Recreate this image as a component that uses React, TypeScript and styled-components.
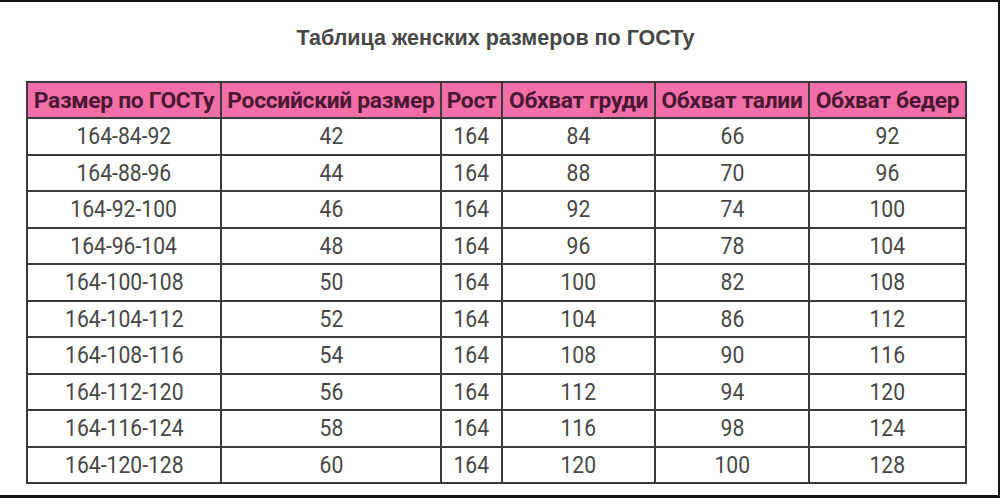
import React from "react";
import styled, { createGlobalStyle } from "styled-components";

const Global = createGlobalStyle`
  html, body { margin: 0; padding: 0; background: #fff; }
  #root { width: 1000px; height: 498px; }
`;

const Frame = styled.div`
  box-sizing: border-box;
  width: 1000px;
  height: 498px;
  border-top: 2px solid #141414;
  border-right: 2px solid #141414;
  border-bottom: 3px solid #141414;
  background: #fff;
  display: flex;
  flex-direction: column;
  padding: 0 0 0 26px;
`;

const Title = styled.h1`
  margin: 0;
  height: 79px;
  box-sizing: border-box;
  padding-top: 24px;
  width: 939px;
  text-align: center;
  font-family: "Liberation Sans", Arial, sans-serif;
  font-weight: 700;
  font-size: 21.5px;
  color: #474747;
`;

const Table = styled.table`
  border-collapse: collapse;
  table-layout: fixed;
  width: 939px;
  font-family: Roboto, "Noto Sans", sans-serif;
`;

const Head = styled.th`
  height: 34px;
  padding: 0;
  background: #f36fa8;
  color: #4a1832;
  font-weight: 700;
  font-size: 22.8px;
  border: 2px solid #3a3a3a;
  white-space: nowrap;
  text-align: center;
  letter-spacing: -0.3px;
  overflow: hidden;
`;

const Cell = styled.td`
  height: 34.5px;
  padding: 0;
  text-align: center;
  color: #474747;
  font-size: 24px;
  font-weight: 400;
  border: 2px solid #3a3a3a;
  line-height: 1;
`;

const Value = styled.span`
  display: inline-block;
  transform: scaleX(0.88);
`;

const cols = [194, 220, 61, 153, 154, 157];
const heads = [
  "Размер по ГОСТу",
  "Российский размер",
  "Рост",
  "Обхват груди",
  "Обхват талии",
  "Обхват бедер",
];

const rows = [
  ["164-84-92", "42", "164", "84", "66", "92"],
  ["164-88-96", "44", "164", "88", "70", "96"],
  ["164-92-100", "46", "164", "92", "74", "100"],
  ["164-96-104", "48", "164", "96", "78", "104"],
  ["164-100-108", "50", "164", "100", "82", "108"],
  ["164-104-112", "52", "164", "104", "86", "112"],
  ["164-108-116", "54", "164", "108", "90", "116"],
  ["164-112-120", "56", "164", "112", "94", "120"],
  ["164-116-124", "58", "164", "116", "98", "124"],
  ["164-120-128", "60", "164", "120", "100", "128"],
];

export default function App() {
  return (
    <>
      <Global />
      <Frame>
        <Title>Таблица женских размеров по ГОСТу</Title>
        <Table>
          <colgroup>
            {cols.map((w, i) => (
              <col key={i} style={{ width: w }} />
            ))}
          </colgroup>
          <thead>
            <tr>
              {heads.map((h) => (
                <Head key={h}>{h}</Head>
              ))}
            </tr>
          </thead>
          <tbody>
            {rows.map((r) => (
              <tr key={r[0]}>
                {r.map((c, i) => (
                  <Cell key={i}>
                    <Value>{c}</Value>
                  </Cell>
                ))}
              </tr>
            ))}
          </tbody>
        </Table>
      </Frame>
    </>
  );
}
